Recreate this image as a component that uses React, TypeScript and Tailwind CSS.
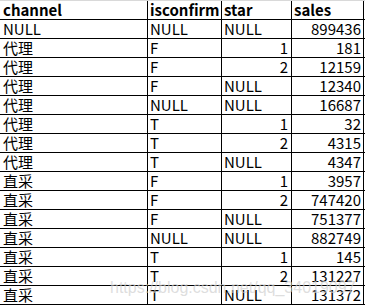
const rows: [string, string, string | number, number][] = [
  ["NULL", "NULL", "NULL", 899436],
  ["代理", "F", 1, 181],
  ["代理", "F", 2, 12159],
  ["代理", "F", "NULL", 12340],
  ["代理", "NULL", "NULL", 16687],
  ["代理", "T", 1, 32],
  ["代理", "T", 2, 4315],
  ["代理", "T", "NULL", 4347],
  ["直采", "F", 1, 3957],
  ["直采", "F", 2, 747420],
  ["直采", "F", "NULL", 751377],
  ["直采", "NULL", "NULL", 882749],
  ["直采", "T", 1, 145],
  ["直采", "T", 2, 131227],
  ["直采", "T", "NULL", 131372],
];

const cell = "flex items-end border-r border-black box-border pb-[1px] leading-[16px]";

function Row({ r }: { r: [string, string, string | number, number] }) {
  const [channel, confirm, star, sales] = r;
  return (
    <div className="flex h-[19px] border-b border-black box-border">
      <div className={`${cell} w-[148px] pl-[3px]`}>{channel}</div>
      <div className={`${cell} w-[74px] pl-[2px]`}>{confirm}</div>
      <div
        className={`${cell} w-[70px] ${
          typeof star === "number" ? "justify-end pr-[3px]" : "pl-[2px]"
        }`}
      >
        {star}
      </div>
      <div className={`${cell} w-[72px] justify-end pr-[2px]`}>{sales}</div>
    </div>
  );
}

export default function App() {
  return (
    <div className="relative w-[365px] h-[305px] overflow-hidden bg-white text-black text-[15px] font-['Noto_Sans_CJK_SC',sans-serif]">
      <div className="border-t border-[#d9d9d9]">
        <div className="flex h-[19px] border-b border-black box-border font-bold">
          <div className={`${cell} w-[148px] pl-[3px]`}>channel</div>
          <div className={`${cell} w-[74px] pl-[2px]`}>isconfirm</div>
          <div className={`${cell} w-[70px] pl-[2px]`}>star</div>
          <div className={`${cell} w-[72px] pl-[2px]`}>sales</div>
        </div>
        {rows.map((r, i) => (
          <Row key={i} r={r} />
        ))}
      </div>
      <div className="absolute left-[110px] top-[276px] text-[16px] text-[#cfcfcf]/70 font-['Liberation_Sans',sans-serif] whitespace-nowrap">
        https://blog.csdn.net/qq_34019097
      </div>
    </div>
  );
}
